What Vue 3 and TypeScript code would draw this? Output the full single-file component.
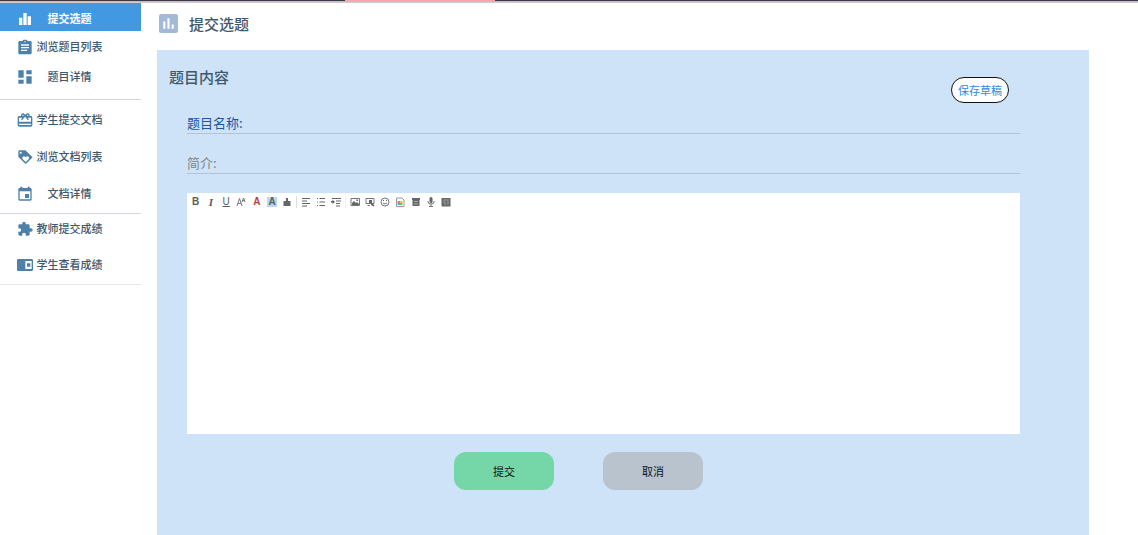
<script setup lang="ts">
import { ref } from 'vue'

interface NavItem {
  label: string
  path: string
}

const groups: NavItem[][] = [
  [
    { label: '提交选题', path: 'M9.500 21h5V3h-5v18zM3 21h5V10H3v11zM16 8v13h5V8h-5z' },
    {
      label: '浏览题目列表',
      path: 'M20 3h-4.2C15.4 1.8 14.3 1 13 1h-2c-1.3 0-2.4.8-2.8 2H4c-1.1 0-2 .9-2 2v16c0 1.1.9 2 2 2h16c1.1 0 2-.9 2-2V5c0-1.1-.9-2-2-2zm-8 0c.6 0 1 .4 1 1s-.4 1-1 1-1-.4-1-1 .4-1 1-1zm3 15H6v-2h9v2zm3-4H6v-2h12v2zm0-4H6V8h12v2z',
    },
    { label: '题目详情', path: 'M2 13h8V2H2v11zm0 9h8v-6H2v6zm12 0h8V11h-8v11zm0-20v6h8V2h-8z' },
  ],
  [
    {
      label: '学生提交文档',
      path: 'M21 6h-2.2c.1-.3.2-.7.2-1 0-1.7-1.300-3-3-3-1.100 0-2 .5-2.500 1.300L12 4l-.5-.7C11 2.500 10.100 2 9 2 7.300 2 6 3.300 6 5c0 .3.1.7.2 1H3.500C2 6 1 7 1 8.500V19.500C1 21 2 22 3.500 22h17c1.500 0 2.500-1 2.500-2.500v-11C23 7 22 6 21 6zm-5-2c.6 0 1 .4 1 1s-.4 1-1 1-1-.4-1-1 .4-1 1-1zM9 4c.6 0 1 .4 1 1s-.4 1-1 1-1-.4-1-1 .4-1 1-1zm12 15.500H3v-2h18v2zm0-5H3V8.500h5L6 11l1.600 1.200L12 7l4.400 5.200L18 11l-2-2.500h5v6z',
    },
    {
      label: '浏览文档列表',
      path: 'M22.400 11.600l-9-9C13 2.200 12.500 2 12 2H4C2.900 2 2 2.900 2 4v7c0 .6.2 1.100.6 1.400l9 9c.4.4.9.6 1.400.6s1.100-.2 1.400-.6l8-8c.4-.4.6-.9.6-1.400s-.2-1.100-.6-1.400zM5.500 7C4.700 7 4 6.300 4 5.500S4.700 4 5.500 4 7 4.700 7 5.500 6.300 7 5.500 7zm11.800 8.300L13 19.500l-4.300-4.200c-.4-.5-.7-1.100-.7-1.800 0-1.400 1.100-2.500 2.500-2.500.7 0 1.300.3 1.800.7l.7.8.7-.7c.5-.5 1.100-.8 1.800-.8 1.400 0 2.500 1.100 2.500 2.500 0 .7-.3 1.300-.7 1.800z',
    },
    {
      label: '文档详情',
      path: 'M18 12h-6v6h6v-6zM16 1v2H8V1H5v2H4c-1.100 0-2 .9-2 2v15c0 1.100.9 2 2 2h16c1.100 0 2-.9 2-2V5c0-1.100-.9-2-2-2h-1V1h-3zm4 19H4V8h16v12z',
    },
  ],
  [
    {
      label: '教师提交成绩',
      path: 'M21 11h-2V7c0-1.100-.9-2-2-2h-4V3.500C13 2.100 11.900 1 10.500 1S8 2.100 8 3.500V5H4C2.900 5 2 5.900 2 7v3.800h1.500c1.500 0 2.700 1.200 2.700 2.700S5 16.200 3.500 16.200H2V20c0 1.100.9 2 2 2h3.800v-1.500c0-1.500 1.200-2.700 2.700-2.700s2.700 1.200 2.700 2.700V22H17c1.100 0 2-.9 2-2v-4h2c1.400 0 2.500-1.100 2.500-2.500S22.400 11 21 11z',
    },
    {
      label: '学生查看成绩',
      path: 'M2 3h20c1 0 2 1 2 2v14c0 1-1 2-2 2H2c-1 0-2-1-2-2V5c0-1 1-2 2-2zm10.500 3v12H22V6h-9.500zm2.500 3.500h5v5h-5v-5z',
    },
  ],
]

const active = ref('提交选题')
const title = ref('')
const intro = ref('')
const content = ref('')
</script>

<template>
  <div class="page">
    <div class="strip"><span class="strip-tab"></span></div>
    <div class="layout">
      <nav class="sidebar">
        <ul v-for="(group, i) in groups" :key="i" class="group">
          <li v-for="item in group" :key="item.label">
            <a href="#" class="item" :class="{ active: item.label === active }" @click.prevent="active = item.label">
              <svg class="nav-icon" viewBox="0 0 24 24" aria-hidden="true"><path :d="item.path" fill-rule="evenodd" /></svg>
              <span class="nav-label">{{ item.label }}</span>
            </a>
          </li>
        </ul>
      </nav>

      <main class="main">
        <header class="head">
          <svg class="head-icon" viewBox="0 0 18 18" aria-hidden="true">
            <rect width="18" height="18" rx="2" fill="#a3bad6" />
            <path d="M4 7h2v7H4zM8 4h2v10H8zM12 10h2v4h-2z" fill="#fff" />
          </svg>
          <h1>提交选题</h1>
        </header>

        <form class="card" @submit.prevent>
          <div class="card-head">
            <h2>题目内容</h2>
            <button type="button" class="save">保存草稿</button>
          </div>

          <div class="fields">
            <div class="field primary">
              <label for="title">题目名称:</label>
              <input id="title" v-model="title" type="text" />
            </div>
            <div class="field">
              <label for="intro">简介:</label>
              <input id="intro" v-model="intro" type="text" />
            </div>

            <div class="editor">
              <div class="toolbar" role="toolbar" aria-label="格式">
                <div class="tools wide">
                  <button type="button" aria-label="粗体"><b>B</b></button>
                  <button type="button" aria-label="斜体"><i class="serif">I</i></button>
                  <button type="button" aria-label="下划线"><u>U</u></button>
                  <button type="button" aria-label="字号">
                    <svg viewBox="0 0 10 10"><path d="M1 9 3.500 1.500 6 9M2 6.500h3M6 5l1.500-4L9 5M6.500 3.500h2" class="line" /></svg>
                  </button>
                  <button type="button" aria-label="文字颜色"><b class="red">A</b></button>
                  <button type="button" aria-label="背景颜色"><b class="mark">A</b></button>
                  <button type="button" aria-label="清除格式">
                    <svg viewBox="0 0 10 10"><path d="M4 1h2v3h2.500v2h-7V4H4zM1.500 6h7v3h-7z" /></svg>
                  </button>
                </div>
                <span class="sep"></span>
                <div class="tools narrow">
                  <button type="button" aria-label="对齐">
                    <svg viewBox="0 0 10 10"><path d="M1 1h8v1H1zM1 3.500h5v1H1zM1 6h8v1H1zM1 8.500h5v1H1z" /></svg>
                  </button>
                  <button type="button" aria-label="列表">
                    <svg viewBox="0 0 10 10"><path d="M1 1h1v1H1zM3.500 1H9v1H3.500zM1 4.500h1v1H1zM3.500 4.500H9v1H3.500zM1 8h1v1H1zM3.500 8H9v1H3.500z" /></svg>
                  </button>
                  <button type="button" aria-label="缩进">
                    <svg viewBox="0 0 10 10"><path d="M1 1h9v1H1zM5 3.500h5v1H5zM5 6h4v1H5zM5 8.500h4v1H5zM0 4h1.500V2.500L4 5 1.500 7V5.500H0z" /></svg>
                  </button>
                </div>
                <span class="sep faint"></span>
                <div class="tools wide">
                  <button type="button" aria-label="图片">
                    <svg viewBox="0 0 10 10"><path d="M1 1.500h8.500v7H1z" class="line" /><path d="M2 8V6l2-2 2 2 1-1 2 2v1zM6.500 2.500h1.500V4H6.500z" /></svg>
                  </button>
                  <button type="button" aria-label="截屏">
                    <svg viewBox="0 0 10 10"><path d="M1 1.500h8v5H1zM2.500 8.500H5" class="line" /><path d="M4 3h3v3H4zM6 6l3.500 2-1 1.500L6 8z" /></svg>
                  </button>
                  <button type="button" aria-label="表情">
                    <svg viewBox="0 0 10 10"><circle cx="5" cy="5" r="4" class="line" /><path d="M3 6q2 2 4 0" class="line" /><path d="M3 3h1v1H3zM6 3h1v1H6z" /></svg>
                  </button>
                  <button type="button" aria-label="文档">
                    <svg viewBox="0 0 10 10">
                      <path d="M1.500 1H7l2 2v6.500H1.500z" fill="#fff" stroke="#999" />
                      <path d="M2.500 4H5v2H2.500z" fill="#e8718d" /><path d="M5 4h2.500v2H5z" fill="#efc63d" />
                      <path d="M2.500 6H5v2H2.500z" fill="#58a9e8" /><path d="M5 6h2.500v2H5z" fill="#75be67" />
                    </svg>
                  </button>
                  <button type="button" aria-label="模板">
                    <svg viewBox="0 0 10 10"><path d="M1 1h8v2H1zM1.500 3h7v6h-7z" /><path d="M3 4.500h4M3 7h4" stroke="#aaa" /></svg>
                  </button>
                  <button type="button" aria-label="语音">
                    <svg viewBox="0 0 10 10"><rect x="3.500" y="0" width="3" height="6" rx="1.500" /><path d="M2 4v1q0 2 3 2t3-2V4M5 7v2M3 9.500h4" class="line" /></svg>
                  </button>
                  <button type="button" aria-label="公式">
                    <svg viewBox="0 0 10 10"><path d="M.5 1h9v8.500h-9z" /><path d="M2 3h6M2 5h2v3M6 5h2M6 7h2" fill="none" stroke="#bbb" stroke-width=".7" /></svg>
                  </button>
                </div>
              </div>
              <textarea v-model="content" aria-label="题目内容"></textarea>
            </div>

            <div class="actions">
              <button type="submit" class="btn submit">提交</button>
              <button type="reset" class="btn cancel">取消</button>
            </div>
          </div>
        </form>
      </main>
    </div>
  </div>
</template>

<style>
body {
  margin: 0;
  background: #fff;
}
</style>

<style scoped>
* {
  box-sizing: border-box;
}
.page {
  display: flex;
  flex-direction: column;
  min-height: 100vh;
  font-family: "Noto Sans CJK SC", "Noto Sans", sans-serif;
  font-size: 11px;
  color: #40586c;
}
button,
input,
textarea {
  font-family: inherit;
  padding: 0;
  border: 0;
  margin: 0;
}
button {
  cursor: pointer;
}
.strip {
  height: 3px;
  background: linear-gradient(#3c3847 1px, #b9b5bc 1px, #d7d5d9);
}
.strip-tab {
  display: block;
  width: 150px;
  height: 1px;
  margin-left: 345px;
  background: #ffa6a6;
}
.layout {
  display: flex;
  flex: 1;
}
.sidebar {
  flex: none;
  width: 141px;
}
.group {
  display: flex;
  flex-direction: column;
  gap: 9px;
  list-style: none;
  margin: 0;
  padding: 6px 0 5px;
  border-bottom: 1px solid #d3d7df;
}
.group:first-child {
  gap: 2px;
  padding: 0 0 8px;
}
.group:last-child {
  gap: 8px;
  padding-top: 1px;
  border-color: #e6e8ed;
}
.item {
  display: flex;
  align-items: center;
  gap: 3px;
  height: 28px;
  padding-left: 17px;
  color: inherit;
  text-decoration: none;
  font-weight: 500;
}
.item.active {
  padding-top: 3px;
  background: #4299e1;
  color: #fff;
  font-weight: 700;
}
.nav-icon {
  flex: none;
  width: 16px;
  height: 16px;
  fill: #4d81aa;
}
.active .nav-icon {
  fill: #fff;
}
.nav-label {
  width: 67px;
  padding-bottom: 2px;
  line-height: 16px;
  text-align: center;
  white-space: nowrap;
}
.main {
  display: flex;
  flex-direction: column;
  flex: 1;
  min-width: 0;
  padding: 0 49px 0 16px;
}
.head {
  display: flex;
  align-items: center;
  gap: 11px;
  height: 47px;
  padding: 0 0 6px 2px;
}
.head-icon {
  width: 19px;
  height: 19px;
}
h1,
h2 {
  margin: 0;
  font-size: 15px;
  line-height: 22px;
  font-weight: 500;
}
.card {
  flex: 1;
  padding: 16px 69px 40px 12px;
  background: #cfe3f8;
}
.card-head {
  display: flex;
  justify-content: space-between;
  height: 47px;
  padding-right: 11px;
}
.save {
  width: 58px;
  height: 26px;
  margin-top: 11px;
  border: 1px solid #111;
  border-radius: 13px;
  background: #fff;
  color: #2f86e4;
  font-size: 11px;
}
.fields {
  padding-left: 18px;
}
.field {
  display: flex;
  align-items: center;
  height: 21px;
  margin-bottom: 19px;
  padding-bottom: 1px;
  border-bottom: 1px solid #b3c2d4;
  font-size: 13px;
  line-height: 19px;
  color: #818589;
}
.primary {
  color: #1b55a5;
}
.field input {
  flex: 1;
  min-width: 0;
  height: 19px;
  margin-left: 6px;
  background: transparent;
  font-size: 13px;
  outline: none;
}
.editor {
  display: flex;
  flex-direction: column;
  background: #fff;
}
.toolbar {
  display: flex;
  align-items: center;
  height: 18px;
  padding-left: 1px;
}
.tools {
  display: flex;
}
.wide {
  width: 107px;
}
.narrow {
  width: 46px;
}
.tools button {
  display: flex;
  flex: 1;
  align-items: center;
  justify-content: center;
  height: 14px;
  background: transparent;
  color: #5c5c5c;
  font-family: "Liberation Sans", sans-serif;
  font-size: 10px;
  line-height: 10px;
}
.tools svg {
  width: 10px;
  height: 10px;
  fill: #666;
}
.tools .line {
  fill: none;
  stroke: #777;
  stroke-width: 1;
}
.serif {
  font-family: "Liberation Serif", serif;
  font-size: 11px;
  font-weight: 700;
}
.red {
  color: #bd3e3e;
}
.mark {
  padding: 0 1px;
  background: #b9d9f3;
}
.sep {
  width: 1px;
  height: 12px;
  margin: 0 1px;
  background: #dcdcdc;
}
.faint {
  background: #f0f0f0;
}
textarea {
  height: 223px;
  background: transparent;
  resize: vertical;
  outline: none;
}
textarea::-webkit-resizer {
  display: none;
}
.actions {
  display: flex;
  justify-content: center;
  gap: 49px;
  padding-top: 18px;
  padding-right: 50px;
}
.btn {
  width: 100px;
  height: 38px;
  border-radius: 12px;
  color: #111;
  font-size: 11px;
}
.submit {
  background: #75d6a7;
}
.cancel {
  background: #b9c3ce;
}
</style>
